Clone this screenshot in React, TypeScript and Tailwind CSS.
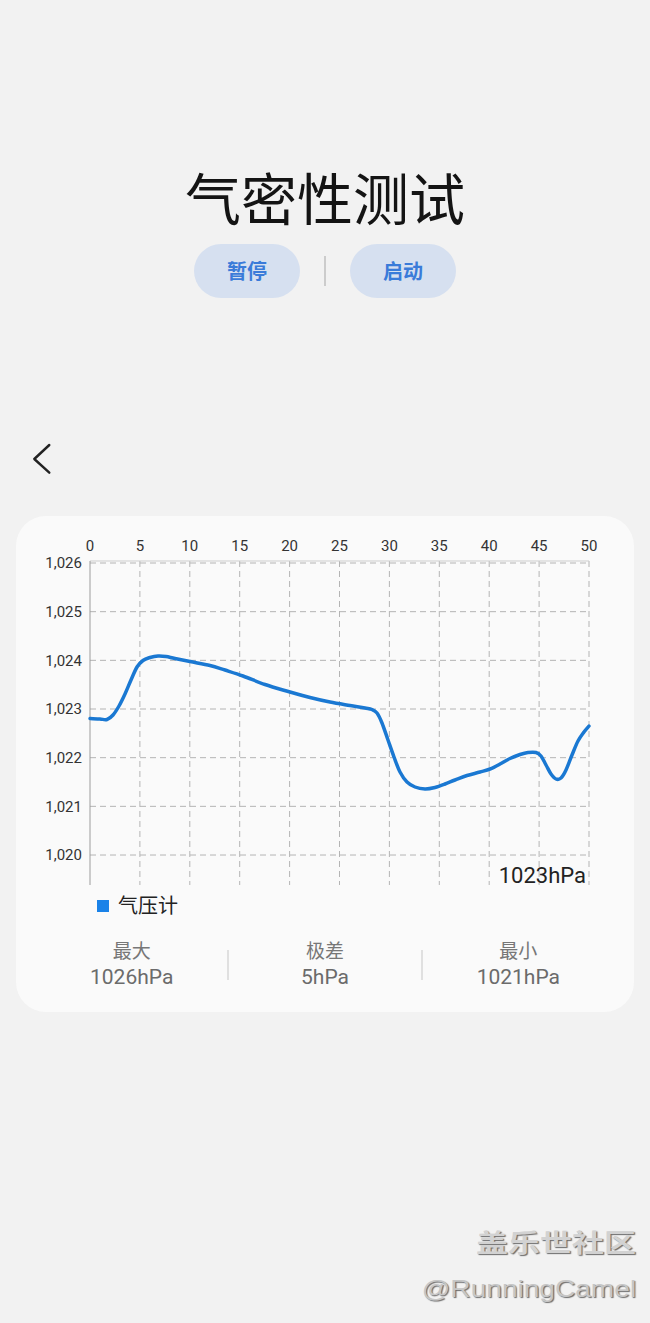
import React from "react";

// pressure trace, in page pixels (x: 0..50 -> 90..589, y: 1,026..1,020 -> 563..855)
const trace: [number, number][] = [
    [90, 718.5], [100, 719], [107, 719.5], [113, 715], [119, 706], [125, 694], [131, 680],
    [137, 667], [143, 660.5], [150, 657.5], [158, 656], [166, 656.5], [175, 658.5], [190, 661.5],
    [210, 665.5], [225, 670], [243, 676], [265, 684.5], [290, 692], [310, 697.5], [330, 702],
    [350, 705.5], [365, 708], [372, 709.5], [377, 713], [382, 723], [388, 740], [394, 757],
    [400, 772], [407, 782], [415, 787], [425, 789], [435, 787.5], [445, 784], [455, 780],
    [467, 775.5], [480, 772], [490, 769], [500, 764], [510, 758.5], [520, 754.5], [528, 752.5],
    [536, 752.5], [541, 756], [546, 765], [551, 774], [556, 779], [561, 778], [566, 770],
    [572, 755], [578, 741], [584, 732], [589, 726],
];

const smooth = (pts: [number, number][]) => {
    let d = `M${pts[0][0]},${pts[0][1]}`;
    for (let i = 0; i < pts.length - 1; i++) {
        const p0 = pts[i - 1] || pts[i];
        const p1 = pts[i];
        const p2 = pts[i + 1];
        const p3 = pts[i + 2] || p2;
        const c1x = p1[0] + (p2[0] - p0[0]) / 6;
        const c1y = p1[1] + (p2[1] - p0[1]) / 6;
        const c2x = p2[0] - (p3[0] - p1[0]) / 6;
        const c2y = p2[1] - (p3[1] - p1[1]) / 6;
        d += ` C${c1x.toFixed(1)},${c1y.toFixed(1)} ${c2x.toFixed(1)},${c2y.toFixed(1)} ${p2[0]},${p2[1]}`;
    }
    return d;
};

const X0 = 90;
const X1 = 589;
const xStep = (X1 - X0) / 10;
const yTicks = ["1,026", "1,025", "1,024", "1,023", "1,022", "1,021", "1,020"];
const yAt = (i: number) => 563 + i * 48.67;

const Chart = () => (
    <svg width={618} height={376} viewBox="16 516 618 376" className="block">
        {/* x labels */}
        {Array.from({length: 11}).map((_, i) => (
            <text key={i} x={X0 + i * xStep} y={550.5} textAnchor="middle" fontSize={15}
                  fill="#333" fontFamily="Roboto, sans-serif">{i * 5}</text>
        ))}
        {/* y labels */}
        {yTicks.map((t, i) => (
            <text key={t} x={82} y={yAt(i) + 5.3} textAnchor="end" fontSize={15}
                  fill="#333" fontFamily="Roboto, sans-serif">{t}</text>
        ))}
        {/* grid */}
        {yTicks.map((t, i) => (
            <line key={"h" + t} x1={X0} x2={X1} y1={yAt(i)} y2={yAt(i)} stroke="#b4b4b4"
                  strokeWidth={1} strokeDasharray="6 4"/>
        ))}
        {Array.from({length: 10}).map((_, i) => (
            <line key={"v" + i} x1={X0 + (i + 1) * xStep} x2={X0 + (i + 1) * xStep} y1={561}
                  y2={885} stroke="#b4b4b4" strokeWidth={1} strokeDasharray="6 4"/>
        ))}
        <line x1={X0} x2={X1} y1={561} y2={561} stroke="#cdcdcd" strokeWidth={1}/>
        <line x1={X0} x2={X0} y1={561} y2={885} stroke="#9c9c9c" strokeWidth={1}/>
        {/* trace */}
        <path d={smooth(trace)} fill="none" stroke="#1a78d2" strokeWidth={3.5}
              strokeLinecap="round" strokeLinejoin="round"/>
        <text x={586} y={883} textAnchor="end" fontSize={22} fill="#222"
              fontFamily="Roboto, sans-serif">1023hPa</text>
    </svg>
);

const Stat = ({label, value}: { label: string; value: string }) => (
    <div className="flex-1 flex flex-col items-center">
        <div className="h-[24px] leading-[24px] text-[19px] text-[#777]">{label}</div>
        <div className="h-[26px] leading-[26px] text-[21px] text-[#6b6b6b]">{value}</div>
    </div>
);

export default function App() {
    return (
        <div
            className="w-full min-h-[1323px] bg-[#f2f2f2] flex flex-col font-[Roboto,'Noto_Sans_CJK_SC',sans-serif]">
            {/* header */}
            <h1 className="mt-[168px] h-[56px] leading-[56px] text-center text-[56px] font-normal text-[#141414] font-['Noto_Sans_CJK_SC',sans-serif]">
                气密性测试
            </h1>
            <div className="mt-[20px] flex items-center justify-center gap-[24px]">
                <button
                    className="w-[106px] h-[54px] rounded-full bg-[#d6e0f0] text-[#3a7bd9] text-[20px] font-bold font-['Noto_Sans_CJK_SC',sans-serif]">
                    暂停
                </button>
                <div className="w-[2px] h-[30px] bg-[#cccccc]"/>
                <button
                    className="w-[106px] h-[54px] rounded-full bg-[#d6e0f0] text-[#3a7bd9] text-[20px] font-bold font-['Noto_Sans_CJK_SC',sans-serif]">
                    启动
                </button>
            </div>

            {/* back */}
            <button className="mt-[144px] ml-[30px] w-[24px] h-[34px] self-start">
                <svg width={24} height={34} viewBox="0 0 24 34">
                    <polyline points="19.3,3 4.3,17 19.3,30.7" fill="none" stroke="#222"
                              strokeWidth={2.4} strokeLinecap="round" strokeLinejoin="round"/>
                </svg>
            </button>

            {/* card */}
            <div className="mt-[40px] mx-[16px] rounded-[30px] bg-[#fafafa] flex flex-col">
                <Chart/>
                <div className="h-[28px] flex items-center pl-[81px] gap-[9px]">
                    <span className="w-[12px] h-[12px] bg-[#1a82e8]"/>
                    <span className="text-[20px] leading-[28px] text-[#222]">气压计</span>
                </div>
                <div className="mt-[20px] mb-[22px] mx-[20px] flex items-center">
                    <Stat label="最大" value="1026hPa"/>
                    <div className="w-[2px] h-[30px] bg-[#e0e0e0]"/>
                    <Stat label="极差" value="5hPa"/>
                    <div className="w-[2px] h-[30px] bg-[#e0e0e0]"/>
                    <Stat label="最小" value="1021hPa"/>
                </div>
            </div>

            {/* watermark */}
            <div className="mt-[214px] pr-[14px] flex flex-col items-end">
                <div
                    className="h-[30px] leading-[30px] text-[25px] font-bold text-[#d2d2d2] origin-right scale-x-[1.28] [text-shadow:1px_1px_1px_#6a6a6a] font-['Noto_Sans_CJK_SC',sans-serif]">
                    盖乐世社区
                </div>
                <div
                    className="mt-[18px] h-[30px] leading-[30px] text-[24px] text-[#c6c6c6] origin-right scale-x-[1.17] [text-shadow:1px_1px_1px_#6a6a6a] font-['Liberation_Sans',sans-serif]">
                    @RunningCamel
                </div>
            </div>
        </div>
    );
}
